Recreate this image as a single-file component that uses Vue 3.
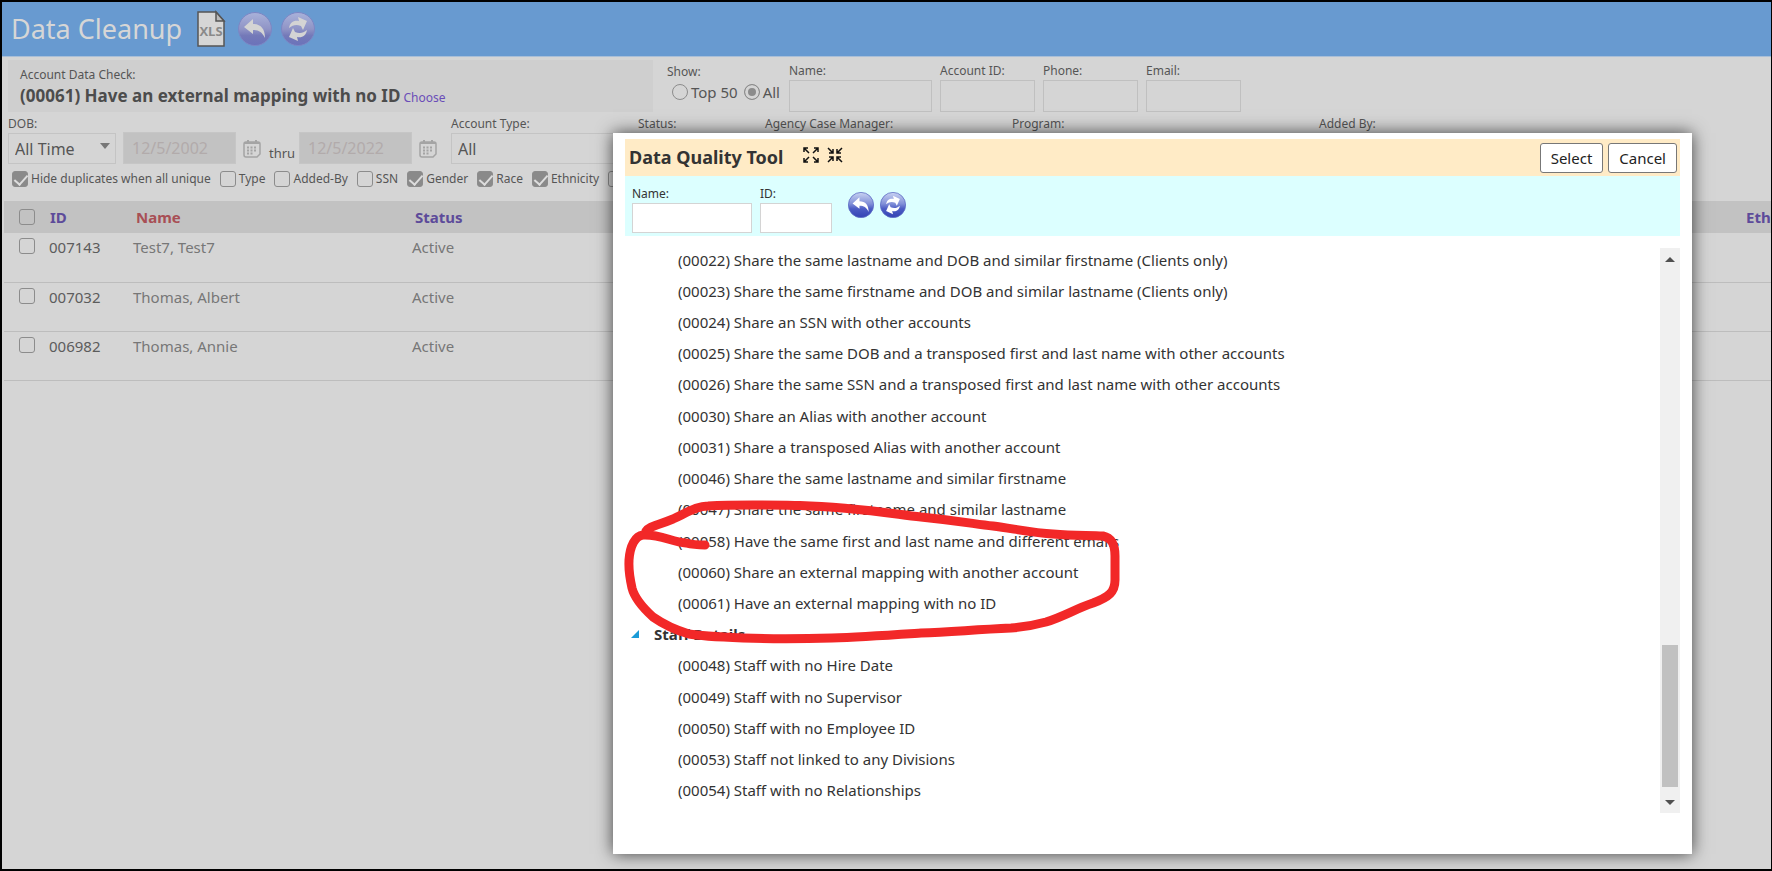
<template>
  <main class="page">
    <header class="topbar">
      <h1>Data Cleanup</h1>
      <button class="plain export" aria-label="Export XLS">
        <svg width="30" height="38" viewBox="0 0 30 38"><path d="M2 2H20L28 11V36H2Z" fill="#d6d6d6" stroke="#555" stroke-width="1.5"/><path d="M20 2V11H28Z" fill="#bbb" stroke="#555" stroke-width="1.5"/><text x="15" y="26" text-anchor="middle" class="xls">XLS</text></svg>
      </button>
      <button class="plain dim" aria-label="Back"><svg width="34" height="34" viewBox="0 0 34 34"><use href="#orb-dim"/><use href="#g-back"/></svg></button>
      <button class="plain dim" aria-label="Refresh"><svg width="34" height="34" viewBox="0 0 34 34"><use href="#orb-dim"/><use href="#g-refresh"/></svg></button>
    </header>

    <svg class="defs" width="0" height="0" aria-hidden="true">
      <defs>
        <linearGradient id="dim" x1="0" y1="0" x2="0" y2="1"><stop offset="0" stop-color="#a9b2da"/><stop offset=".5" stop-color="#9094c6"/><stop offset=".7" stop-color="#7479b8"/><stop offset="1" stop-color="#6b72ba"/></linearGradient>
        <linearGradient id="lit" x1="0" y1="0" x2="0" y2="1"><stop offset="0" stop-color="#c9d3f2"/><stop offset=".45" stop-color="#8290d8"/><stop offset=".65" stop-color="#4c5cc4"/><stop offset="1" stop-color="#3442b4"/></linearGradient>
        <g id="orb-dim"><circle cx="17" cy="17" r="16.500" fill="url(#dim)" stroke="#7c86c4"/></g>
        <g id="orb-lit"><circle cx="17" cy="17" r="16.500" fill="url(#lit)" stroke="#5a68c4"/></g>
        <path id="g-back" d="M6 15L15 7V12C23 12 27 17 27 26C24 20 21 18 15 18V22Z" fill="currentColor"/>
        <g id="g-refresh" fill="currentColor"><path d="M8 16C9 10 13 8 18 9L17 5L26 9L22 18L20 14C15 12 12 13 8 16Z"/><path d="M26 18C25 24 21 26 16 25L17 29L8 25L12 16L14 20C19 22 22 21 26 18Z"/></g>
        <g id="g-cal"><path d="M3 3H15Q17 3 17 5V15L14 18H3Q1 18 1 16V5Q1 3 3 3Z" fill="none" stroke="#a4a4a4" stroke-width="1.500"/><path d="M1 4H17M5 1V5M13 1V5" stroke="#a4a4a4" stroke-width="2"/><path d="M4 8.500H14M4 11.500H14M4 14.500H11" stroke="#a4a4a4" stroke-width="2" stroke-dasharray="2 1.500"/></g>
      </defs>
    </svg>

    <section class="filters">
      <div class="row first">
        <div class="check-box">
          <span class="lbl">Account Data Check:</span>
          <p class="chosen"><b>(00061) Have an external mapping with no ID</b> <a href="#">Choose</a></p>
        </div>
        <fieldset class="show">
          <legend>Show:</legend>
          <div class="radios">
            <label><input type="radio" name="show">Top 50</label>
            <label><input type="radio" name="show" checked>All</label>
          </div>
        </fieldset>
        <label v-for="f in textFields" :key="f.label" class="field" :class="f.size">{{ f.label }}<input type="text"></label>
      </div>

      <div class="row second">
        <div class="dob">
          <label class="field dobsel">DOB:<select><option>All Time</option></select></label>
          <input class="date" type="text" value="12/5/2002" disabled aria-label="From date">
          <button class="plain cal" aria-label="Pick from date"><svg width="18" height="19" viewBox="0 0 18 19"><use href="#g-cal"/></svg></button>
          <span class="thru">thru</span>
          <input class="date" type="text" value="12/5/2022" disabled aria-label="To date">
          <button class="plain cal" aria-label="Pick to date"><svg width="18" height="19" viewBox="0 0 18 19"><use href="#g-cal"/></svg></button>
        </div>
        <label v-for="s in selects" :key="s.label" class="field" :class="s.size">{{ s.label }}<select><option>All</option></select></label>
      </div>

      <div class="ticks">
        <label v-for="t in ticks" :key="t.label"><input type="checkbox" :checked="t.on">{{ t.label }}</label>
      </div>
    </section>

    <table class="accounts">
      <thead>
        <tr><th class="c-tick"><input type="checkbox" aria-label="Select all"></th><th class="c-id"><a href="#">ID</a></th><th class="c-name"><a href="#" class="sorted">Name</a></th><th><a href="#">Status</a></th><th class="c-eth"><a href="#">Ethnicity</a></th></tr>
      </thead>
      <tbody>
        <tr v-for="a in accounts" :key="a.id"><td class="c-tick"><input type="checkbox" :aria-label="'Select ' + a.id"></td><td class="id">{{ a.id }}</td><td>{{ a.name }}</td><td>Active</td><td></td></tr>
      </tbody>
    </table>

    <section class="dialog" role="dialog" aria-labelledby="dlg-title">
      <header class="dlg-head">
        <h2 id="dlg-title">Data Quality Tool</h2>
        <button class="plain" aria-label="Expand all"><svg width="16" height="16" viewBox="0 0 16 16" class="arrows"><path d="M6 6L1 1M1 5V1H5M10 6L15 1M11 1H15V5M6 10L1 15M1 11V15H5M10 10L15 15M15 11V15H11"/></svg></button>
        <button class="plain" aria-label="Collapse all"><svg width="16" height="16" viewBox="0 0 16 16" class="arrows"><path d="M1 1L6 6M2 6H6V2M15 1L10 6M10 2V6H14M1 15L6 10M2 10H6V14M15 15L10 10M10 14V10H14"/></svg></button>
        <div class="actions"><button class="btn">Select</button><button class="btn">Cancel</button></div>
      </header>
      <div class="dlg-filter">
        <label class="field f-name">Name:<input type="text"></label>
        <label class="field f-id">ID:<input type="text"></label>
        <div class="orbs">
          <button class="plain lit" aria-label="Undo search"><svg width="26" height="26" viewBox="0 0 34 34"><use href="#orb-lit"/><use href="#g-back"/></svg></button>
          <button class="plain lit" aria-label="Run search"><svg width="26" height="26" viewBox="0 0 34 34"><use href="#orb-lit"/><use href="#g-refresh"/></svg></button>
        </div>
      </div>
      <div class="dlg-body">
        <ul class="tree">
          <li v-for="c in checks" :key="c" :class="{ group: c === 'Staff Details' }">
            <svg v-if="c === 'Staff Details'" width="8" height="8" viewBox="0 0 8 8"><path d="M8 0V8H0Z" fill="#1a9bd7"/></svg>{{ c }}
          </li>
        </ul>
        <div class="scrollbar">
          <svg width="10" height="5" viewBox="0 0 10 5"><path d="M0 5L5 0L10 5Z" fill="#505050"/></svg>
          <div class="thumb"></div>
          <svg width="10" height="5" viewBox="0 0 10 5"><path d="M0 0L5 5L10 0Z" fill="#505050"/></svg>
        </div>
      </div>
      <svg class="marker" width="500" height="150" viewBox="623 497 500 150" aria-hidden="true">
        <path d="M646 531C648 527 656 526 673 519C690 511 698 506 708 506C740 504 770 505 800 505.500C850 507 880 512 921 517C960 521 975 524 993 526C1015 529 1035 533 1053 534C1075 536 1090 535 1103 536C1112 538 1115 545 1115 556V580C1115 592 1109 597 1093 603C1075 609 1065 616 1046 622C1035 625 1025 627 1011 628C970 630 950 632 921 633C890 635 860 637 832 638C800 639 770 639 743 638C720 637 700 636 689 634C672 629 663 624 653 617C642 607 634 596 632 588C628 570 629 565 629 560C630 546 635 536 643 535C660 534 672 542 686 543C694 545 700 545 705 545"/>
      </svg>
    </section>
  </main>
</template>

<script setup>
const textFields = [
  { label: 'Name:', size: 'w-wide' },
  { label: 'Account ID:', size: 'w-short' },
  { label: 'Phone:', size: 'w-short' },
  { label: 'Email:', size: 'w-short' }
]
const selects = [
  { label: 'Account Type:', size: 's-type' },
  { label: 'Status:', size: 's-status' },
  { label: 'Agency Case Manager:', size: 's-manager' },
  { label: 'Program:', size: 's-program' },
  { label: 'Added By:', size: 's-added' }
]
const ticks = [
  { label: 'Hide duplicates when all unique', on: true },
  { label: 'Type', on: false },
  { label: 'Added-By', on: false },
  { label: 'SSN', on: false },
  { label: 'Gender', on: true },
  { label: 'Race', on: true },
  { label: 'Ethnicity', on: true },
  { label: 'DOB', on: false }
]
const accounts = [
  { id: '007143', name: 'Test7, Test7' },
  { id: '007032', name: 'Thomas, Albert' },
  { id: '006982', name: 'Thomas, Annie' }
]
const checks = [
  '(00022) Share the same lastname and DOB and similar firstname (Clients only)',
  '(00023) Share the same firstname and DOB and similar lastname (Clients only)',
  '(00024) Share an SSN with other accounts',
  '(00025) Share the same DOB and a transposed first and last name with other accounts',
  '(00026) Share the same SSN and a transposed first and last name with other accounts',
  '(00030) Share an Alias with another account',
  '(00031) Share a transposed Alias with another account',
  '(00046) Share the same lastname and similar firstname',
  '(00047) Share the same firstname and similar lastname',
  '(00058) Have the same first and last name and different emails',
  '(00060) Share an external mapping with another account',
  '(00061) Have an external mapping with no ID',
  'Staff Details',
  '(00048) Staff with no Hire Date',
  '(00049) Staff with no Supervisor',
  '(00050) Staff with no Employee ID',
  '(00053) Staff not linked to any Divisions',
  '(00054) Staff with no Relationships'
]
</script>

<style>
body { background: #d5d5d5; }
</style>

<style scoped>
* { box-sizing: border-box; }
.page { position: relative; min-height: 100vh; overflow: hidden; border: 2px solid #000; border-right-width: 1px; background: #d5d5d5; color: #555; font: 12px/18px "Noto Sans", "Open Sans", sans-serif; }
.defs { position: absolute; }
h1, h2, p, ul { margin: 0; padding: 0; }
input, select, button { font: inherit; color: inherit; margin: 0; }
a { color: #6a4db8; text-decoration: none; }
.plain { padding: 0; border: 0; background: none; display: flex; flex: none; }
.topbar { display: flex; align-items: center; height: 55px; padding: 0 9px; background: #689ad0; border-bottom: 1px solid #a9bfd8; }
h1 { margin-right: 14px; font-size: 27px; line-height: 40px; font-weight: 400; color: #d6d6d6; }
.topbar .plain { margin-right: 9px; }
.topbar .export { margin-right: 12px; }
.topbar .dim { color: #d4d4d4; }
.lit { color: #fff; }
.xls { font: bold 13px "Open Sans", sans-serif; fill: #8a8a8a; }
.filters { padding: 3px 0 0 6px; }
.row { display: flex; }
.first { height: 52px; }
.check-box { flex: none; width: 645px; padding: 6px 12px 0; background: #cfcfcf; }
.lbl { display: block; }
.chosen { line-height: 24px; }
.chosen b { font-size: 17px; color: #4c4c4c; }
.show { flex: none; width: 122px; margin: 3px 0 0 14px; padding: 0; border: 0; }
legend { padding: 0; }
.radios { display: flex; gap: 6px; padding-left: 5px; font-size: 15px; line-height: 22px; }
.radios label { display: flex; align-items: center; gap: 3px; }
input[type=radio] { appearance: none; width: 16px; height: 16px; border: 1px solid #8c8c8c; border-radius: 50%; }
input[type=radio]:checked { background: #8c8c8c; box-shadow: inset 0 0 0 3px #d5d5d5; }
.field { display: flex; flex-direction: column; flex: none; }
.field input { width: 100%; height: 32px; border: 1px solid #c0c0c0; background: transparent; padding: 0 8px; }
.first .field { margin: 2px 8px 0 0; }
.first .w-wide { width: 143px; }
.w-short { width: 95px; }
.second { margin-top: 3px; }
.dob { display: flex; align-items: flex-end; width: 443px; flex: none; }
select { width: 100%; height: 31px; appearance: none; border: 1px solid #c4c4c4; background: transparent; padding: 0 6px; font-size: 16px; color: #555; }
.dobsel { position: relative; width: 108px; margin-right: 7px; }
.dobsel::after { content: ""; position: absolute; right: 6px; bottom: 15px; border: 5px solid transparent; border-top: 6px solid #777; border-bottom: 0; }
.date { width: 113px; height: 32px; padding: 0 8px; border: 1px solid #c6c6c6; background: #c2c2c2; font-size: 16px; color: #b2abab; }
.cal { margin: 0 8px 6px 7px; }
.thru { width: 30px; padding-bottom: 2px; font-size: 13px; }
.s-type { width: 179px; margin-right: 8px; }
.s-status { width: 119px; margin-right: 8px; }
.s-manager { width: 239px; margin-right: 8px; }
.s-program { width: 299px; margin-right: 8px; }
.s-added { width: 239px; }
.ticks { display: flex; gap: 9px; margin: 6px 0 0 4px; }
.ticks label { display: flex; align-items: center; gap: 3px; white-space: nowrap; }
input[type=checkbox] { appearance: none; flex: none; width: 16px; height: 16px; border: 1px solid #8c8c8c; border-radius: 3px; display: block; }
input[type=checkbox]:checked { background: #8a8a8a; }
input[type=checkbox]:checked::after { content: ""; display: block; width: 6px; height: 11px; margin-left: 4px; border: solid #ddd; border-width: 0 2px 2px 0; transform: rotate(42deg); }
.accounts { width: calc(100% - 2px); margin: 13px 0 0 2px; table-layout: fixed; border-collapse: collapse; font-size: 15px; line-height: 20px; color: #777; }
.accounts th { height: 32px; padding: 0 0 0 3px; background: #c2c2c2; text-align: left; overflow: hidden; }
.accounts th.c-id { padding-left: 1px; }
.accounts th a { color: #5d4b9a; }
.accounts th a.sorted { color: #a84f55; }
.accounts td { height: 49px; padding: 4px 0 0; vertical-align: top; border-bottom: 1px solid #bdbdbd; }
.accounts .c-tick { width: 45px; padding-left: 15px; }
.accounts td.c-tick { padding-top: 5px; }
.c-id { width: 84px; }
.c-name { width: 279px; }
.accounts .c-eth { width: 28px; }
.accounts .id { color: #5c5c5c; }
.dialog { position: absolute; left: 611px; right: 79px; top: 131px; bottom: 15px; display: flex; flex-direction: column; padding: 6px 12px 0; background: #fff; color: #333; box-shadow: 0 0 16px rgba(0, 0, 0, .7); }
.dlg-head { display: flex; flex: none; height: 37px; padding: 0 3px 0 4px; background: #ffebc6; }
h2 { margin-right: 20px; font-size: 18px; line-height: 36px; }
.dlg-head .plain { margin: 8px 8px 0 0; height: 16px; }
.arrows { fill: none; stroke: #111; stroke-width: 1.5; }
.actions { display: flex; gap: 5px; align-items: center; margin-left: auto; }
.btn { height: 30px; padding: 0 10px; border: 1px solid #777; border-radius: 3px; background: #fff; font-size: 15px; color: #222; }
.dlg-filter { display: flex; flex: none; height: 60px; padding: 9px 7px 0; background: #dcffff; gap: 8px; }
.dlg-filter .field input { height: 30px; border-color: #d4d4d4; background: #fff; }
.f-name { width: 120px; }
.f-id { width: 72px; }
.orbs { display: flex; gap: 6px; margin: 7px 0 0 8px; }
.dlg-body { display: flex; flex: 1; padding-top: 8px; }
.tree { display: grid; grid-auto-rows: 1fr; flex: 1; margin-bottom: 48px; list-style: none; font-size: 15px; }
.tree li { display: flex; align-items: center; padding-left: 53px; white-space: nowrap; }
.tree .group { padding-left: 6px; gap: 15px; font-weight: 700; }
.scrollbar { display: flex; flex-direction: column; align-items: center; width: 20px; margin: 4px 0 41px; padding: 9px 0 8px; background: #f0f0f0; }
.thumb { width: 16px; height: 142px; margin: auto 0 13px; background: #c1c1c1; }
.marker { position: absolute; left: 10px; top: 364px; }
.marker path { fill: none; stroke: #f22828; stroke-width: 9; stroke-linecap: round; stroke-linejoin: round; }
</style>
